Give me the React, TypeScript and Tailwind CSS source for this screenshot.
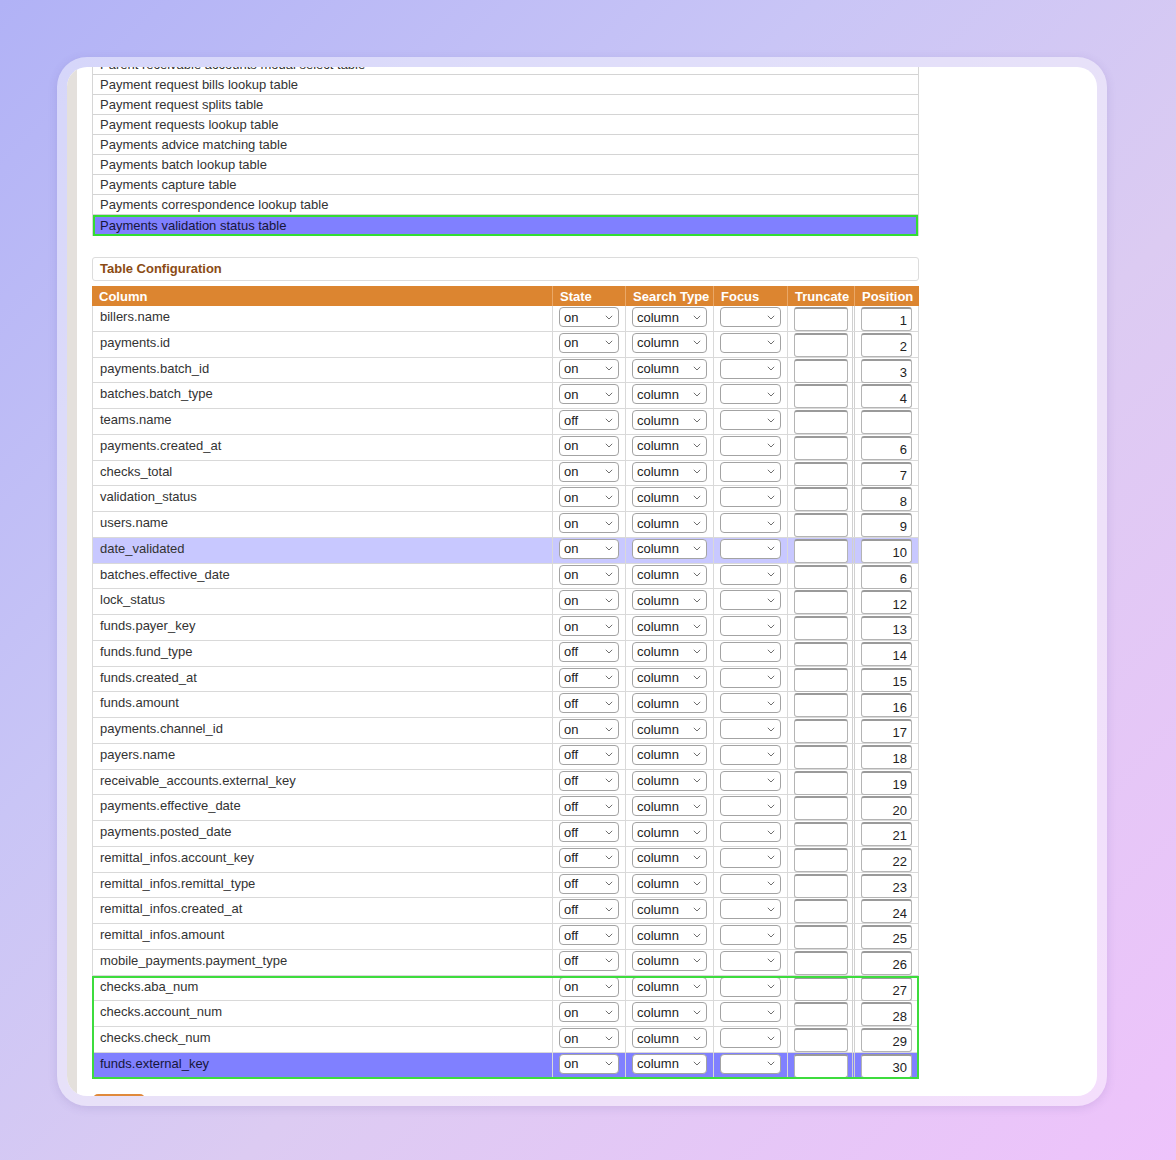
import clsx from 'clsx'

const font = { fontFamily: '"Liberation Sans", Arial, Helvetica, sans-serif' }

const lookupTables = [
  'Payment request bills lookup table',
  'Payment request splits table',
  'Payment requests lookup table',
  'Payments advice matching table',
  'Payments batch lookup table',
  'Payments capture table',
  'Payments correspondence lookup table',
]

type Row = { name: string; state: 'on' | 'off'; position: string }

const rows: Row[] = [
  { name: 'billers.name', state: 'on', position: '1' },
  { name: 'payments.id', state: 'on', position: '2' },
  { name: 'payments.batch_id', state: 'on', position: '3' },
  { name: 'batches.batch_type', state: 'on', position: '4' },
  { name: 'teams.name', state: 'off', position: '' },
  { name: 'payments.created_at', state: 'on', position: '6' },
  { name: 'checks_total', state: 'on', position: '7' },
  { name: 'validation_status', state: 'on', position: '8' },
  { name: 'users.name', state: 'on', position: '9' },
  { name: 'date_validated', state: 'on', position: '10' },
  { name: 'batches.effective_date', state: 'on', position: '6' },
  { name: 'lock_status', state: 'on', position: '12' },
  { name: 'funds.payer_key', state: 'on', position: '13' },
  { name: 'funds.fund_type', state: 'off', position: '14' },
  { name: 'funds.created_at', state: 'off', position: '15' },
  { name: 'funds.amount', state: 'off', position: '16' },
  { name: 'payments.channel_id', state: 'on', position: '17' },
  { name: 'payers.name', state: 'off', position: '18' },
  { name: 'receivable_accounts.external_key', state: 'off', position: '19' },
  { name: 'payments.effective_date', state: 'off', position: '20' },
  { name: 'payments.posted_date', state: 'off', position: '21' },
  { name: 'remittal_infos.account_key', state: 'off', position: '22' },
  { name: 'remittal_infos.remittal_type', state: 'off', position: '23' },
  { name: 'remittal_infos.created_at', state: 'off', position: '24' },
  { name: 'remittal_infos.amount', state: 'off', position: '25' },
  { name: 'mobile_payments.payment_type', state: 'off', position: '26' },
  { name: 'checks.aba_num', state: 'on', position: '27' },
  { name: 'checks.account_num', state: 'on', position: '28' },
  { name: 'checks.check_num', state: 'on', position: '29' },
  { name: 'funds.external_key', state: 'on', position: '30' },
]

const grid = 'grid grid-cols-[461px_73px_88px_74px_67px_64px]'

function Chevron() {
  return (
    <svg width="8" height="5" viewBox="0 0 8 5" className="shrink-0">
      <path d="M0.8 0.8 L4 4 L7.2 0.8" fill="none" stroke="#707070" strokeWidth="1" />
    </svg>
  )
}

function FakeSelect({ value, className }: { value: string; className: string }) {
  return (
    <div
      className={clsx(
        'mt-px flex h-[20px] items-center justify-between rounded-[4px] border border-[#a3a3a3] bg-white pl-[4px] pr-[5px] text-[13px] leading-none text-[#222]',
        className
      )}
    >
      <span>{value}</span>
      <Chevron />
    </div>
  )
}

function FakeInput({ value, className }: { value?: string; className: string }) {
  return (
    <div
      className={clsx(
        'mt-px flex h-[24px] items-center justify-end rounded-[3px] border border-[#b4b4b4] border-t-2 border-t-[#9a9a9a] bg-white pr-[4px] pt-[3px] text-[13px] text-[#222]',
        className
      )}
    >
      {value}
    </div>
  )
}

function ConfigRow({ row, index }: { row: Row; index: number }) {
  const highlighted = index === 9
  const selected = index === rows.length - 1
  return (
    <div
      className={clsx(
        grid,
        'h-[25.75px] border-b border-[#d9d9d9]',
        highlighted && 'bg-[#c8c8ff]',
        selected && 'bg-[#8080ff]'
      )}
    >
      <div
        className={clsx(
          'border-x border-[#d9d9d9] pl-[7px] pt-[3px] text-[13px] leading-[16px]',
          selected ? 'text-[#16163a]' : 'text-[#333]'
        )}
      >
        {row.name}
      </div>
      <div className="border-r border-[#d9d9d9] pl-[6px]">
        <FakeSelect value={row.state} className="w-[60px]" />
      </div>
      <div className="border-r border-[#d9d9d9] pl-[6px]">
        <FakeSelect value="column" className="w-[75px]" />
      </div>
      <div className="border-r border-[#d9d9d9] pl-[6px]">
        <FakeSelect value="" className="w-[61px]" />
      </div>
      <div className="border-r-[3px] border-double border-[#d0d0d0] pl-[6px]">
        <FakeInput className="w-[54px]" />
      </div>
      <div className="border-r border-[#d9d9d9] pl-[6px]">
        <FakeInput value={row.position} className="w-[51px]" />
      </div>
    </div>
  )
}

export default function App() {
  const head = rows.slice(0, 26)
  const tail = rows.slice(26)

  return (
    <div
      style={font}
      className="min-h-[1160px] w-full bg-[linear-gradient(135deg,#b1b2f6_0%,#c9c5f6_35%,#dccbf2_60%,#eec3fb_100%)] pl-[57px] pt-[57px]"
    >
      <div className="h-[1049px] w-[1050px] rounded-[30px] bg-white/45 p-[10px] shadow-[0_2px_10px_rgba(90,70,150,0.15)]">
        <div className="flex h-full overflow-hidden rounded-[20px] bg-white">
          <div className="w-[10px] shrink-0 bg-[#e4e0dc]" />
          <div className="flex-1 pl-[15px]">
            {/* lookup table list, scrolled so the first row is half hidden */}
            <div className="-mt-[12px] w-[827px] border-x border-[#d6d6d6] text-[13px] text-[#333]">
              {['Parent receivable accounts modal select table', ...lookupTables].map((t) => (
                <div key={t} className="h-[20px] border-b border-[#d4d4d4] pl-[7px] leading-[19px]">
                  {t}
                </div>
              ))}
              <div className="h-[21px] bg-[#8080ff] pl-[7px] leading-[22px] text-[#16163a] outline-2 -outline-offset-2 outline-[#33dd33]">
                Payments validation status table
              </div>
            </div>

            <div className="mt-[21px] h-[24px] w-[827px] rounded-[3px] border border-[#dcdcdc] pl-[7px] text-[13px] font-bold leading-[22px] text-[#8b4b14]">
              Table Configuration
            </div>

            <div className="mt-[5px] w-[827px]">
              <div className={clsx(grid, 'h-[20px] bg-[#dc8530] text-[13px] font-bold leading-[21px] text-white')}>
                {['Column', 'State', 'Search Type', 'Focus', 'Truncate', 'Position'].map((h, i) => (
                  <div key={h} className={clsx('pl-[7px]', i < 5 && 'border-r border-[#eaa867]')}>
                    {h}
                  </div>
                ))}
              </div>
              {head.map((r, i) => (
                <ConfigRow key={r.name} row={r} index={i} />
              ))}
              <div className="relative">
                {tail.map((r, i) => (
                  <ConfigRow key={r.name} row={r} index={i + 26} />
                ))}
                <div className="pointer-events-none absolute inset-0 border-2 border-[#3ddc3d]" />
              </div>
            </div>

            <div className="ml-px mt-[15px] h-[24px] w-[52px] rounded-[5px] bg-[#e08a3c]" />
          </div>
        </div>
      </div>
    </div>
  )
}
